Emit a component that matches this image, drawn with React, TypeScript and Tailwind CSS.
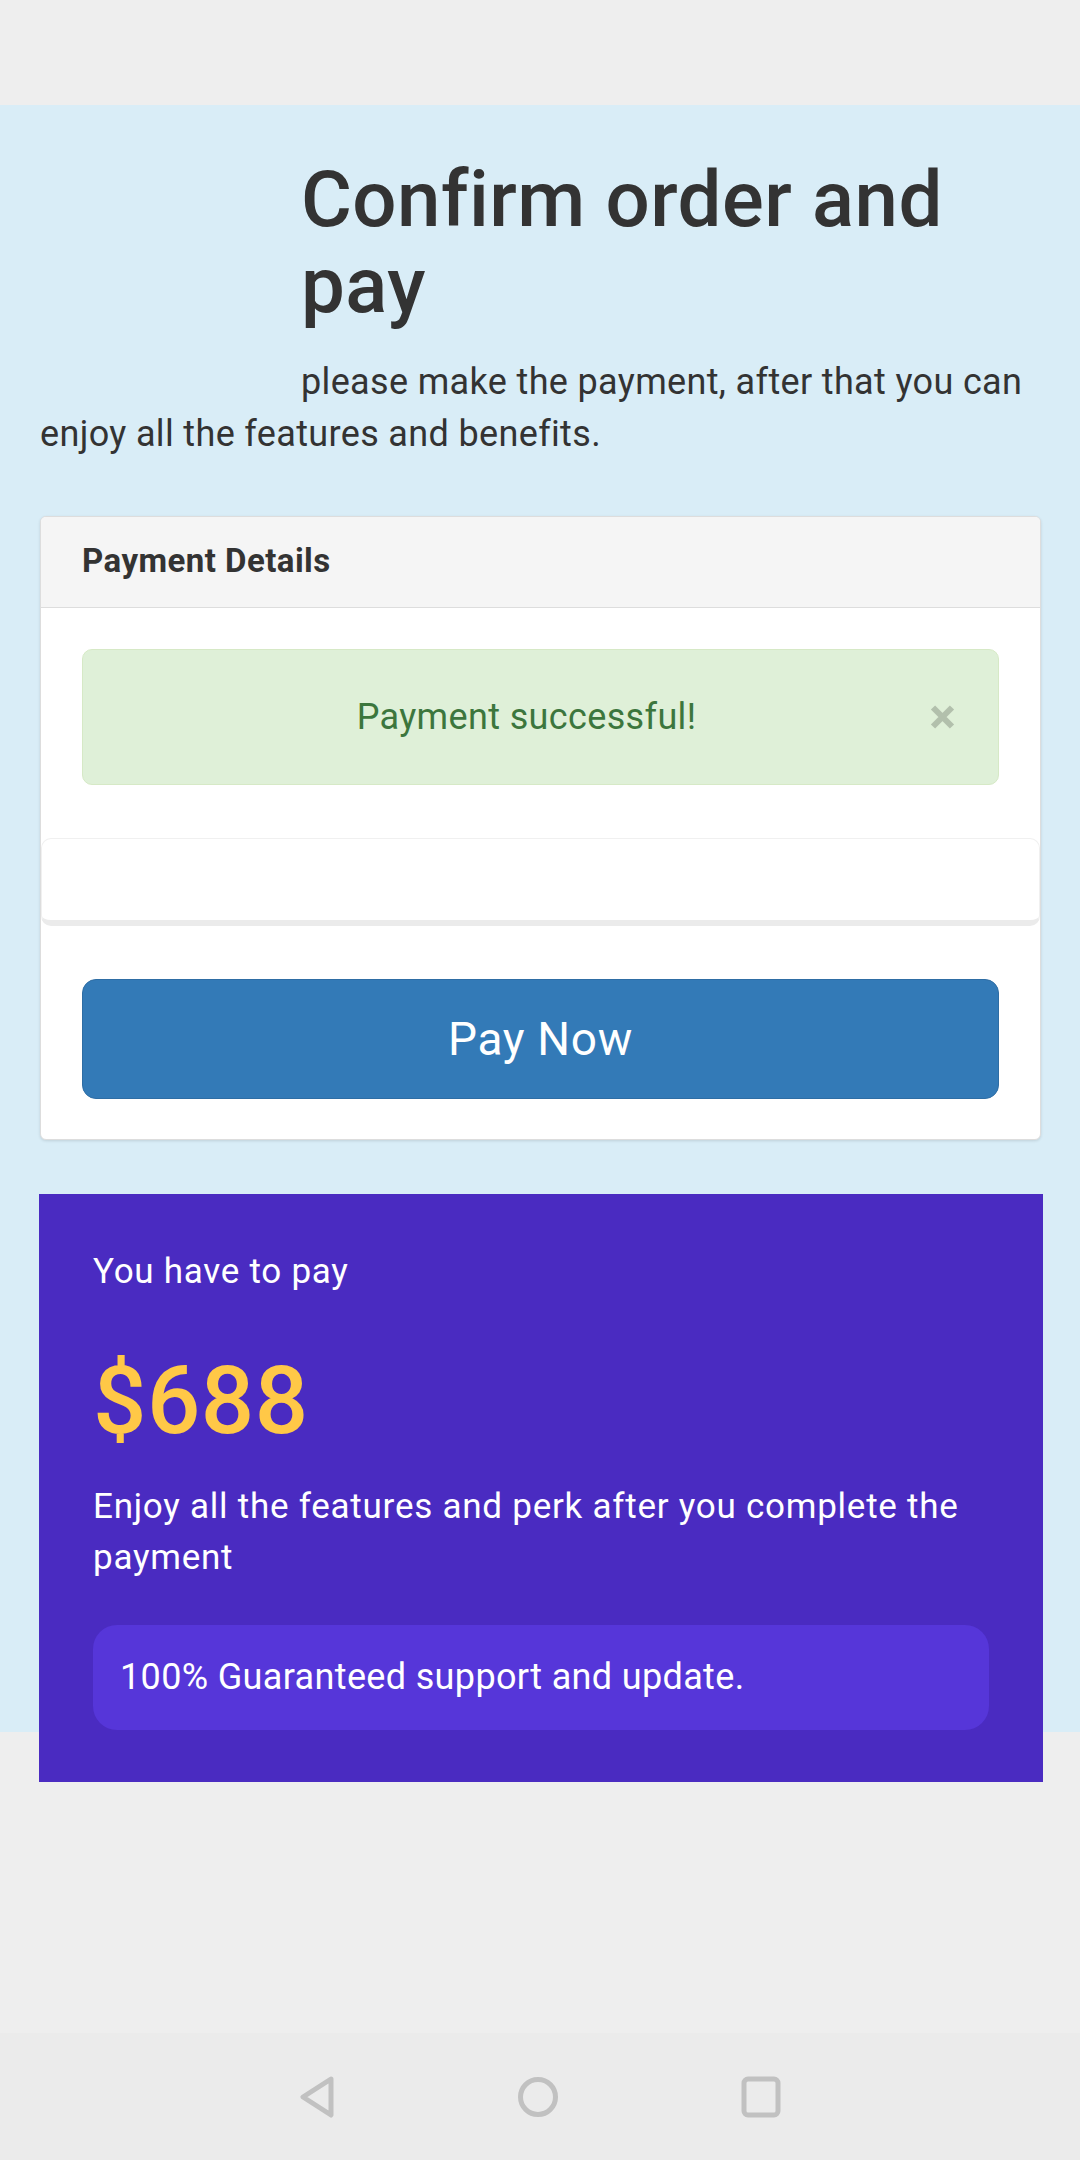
import React from "react";

const NavBar = () => (
  <div className="mt-auto h-[127px] bg-[#ebebeb] flex items-center justify-center gap-[183px]">
    <svg width="36" height="42" viewBox="0 0 36 42" fill="none">
      <path d="M32 3 L4 21 L32 39 Z" stroke="#c1c1c1" strokeWidth="5" strokeLinejoin="round" />
    </svg>
    <svg width="40" height="42" viewBox="0 0 40 42" fill="none">
      <circle cx="20" cy="21" r="17.5" stroke="#c1c1c1" strokeWidth="5" />
    </svg>
    <svg width="40" height="42" viewBox="0 0 40 42" fill="none">
      <rect x="3" y="3" width="34" height="36" rx="4" stroke="#c1c1c1" strokeWidth="5" />
    </svg>
  </div>
);

const App = () => {
  return (
    <div className="min-h-[2160px] flex flex-col bg-[#eeeeee] font-['Roboto',sans-serif] text-[#333]">
      <div className="h-[105px] shrink-0" />

      {/* 결제 확인 섹션 */}
      <section className="h-[1627px] shrink-0 bg-[#d9edf7] pl-[40px] pr-[39px] pt-[52px]">
        <h1 className="pl-[261px] text-[78px] leading-[86px] font-medium tracking-[0.45px]">Confirm order and pay</h1>
        <p className="mt-[27px] indent-[261px] text-[36px] leading-[52px] tracking-[0.35px]">
          please make the payment, after that you can enjoy all the features and benefits.
        </p>

        <div className="mt-[56px] bg-white border border-[#ddd] rounded-[6px] shadow-[0_1px_3px_rgba(0,0,0,0.12)] overflow-hidden">
          <div className="bg-[#f5f5f5] border-b border-[#ddd] px-[41px] pt-[20px] pb-[22px] text-[33px] leading-[48px] font-bold tracking-[0.45px]">
            Payment Details
          </div>
          <div className="px-[41px] pt-[41px] pb-[40px] flex flex-col">
            <div className="relative rounded-[10px] border border-[#d6e9c6] bg-[#dff0d8] text-[#3c763d] text-[36px] leading-[52px] py-[41px] pl-[41px] pr-[69px] text-center tracking-[0.36px]">
              Payment successful!
              <svg className="absolute right-[43px] top-1/2 -translate-y-1/2" width="25" height="25" viewBox="0 0 25 25">
                <path d="M3 3 L22 22 M22 3 L3 22" stroke="#000" strokeOpacity="0.2" strokeWidth="6" />
              </svg>
            </div>

            <div className="mt-[53px] -mx-[41px] h-[88px] rounded-[10px] bg-white border border-[#f0f0f0] border-b-[6px] border-b-[#ebebeb]" />

            <button className="mt-[53px] h-[120px] w-full rounded-[14px] bg-[#337ab7] border border-[#2e6da4] text-white text-[46px] tracking-[0.7px]">
              Pay Now
            </button>
          </div>
        </div>

        <div className="mt-[54px] -ml-[1px] -mr-[2px] bg-[#4a2bc1] px-[54px] pt-[53px] pb-[52px] text-white">
          <p className="text-[35px] leading-[50px] tracking-[0.73px]">You have to pay</p>
          <p className="mt-[53px] text-[94px] leading-[102px] font-medium text-[#ffc847] tracking-[0.5px]">$688</p>
          <p className="mt-[29px] text-[35px] leading-[51px] tracking-[0.75px]">
            Enjoy all the features and perk after you complete the payment
          </p>
          <div className="mt-[42px] rounded-[24px] bg-[#5636d9] px-[27px] py-[26px] text-[36px] leading-[53px] tracking-[0.35px]">
            100% Guaranteed support and update.
          </div>
        </div>
      </section>

      <NavBar />
    </div>
  );
};

export default App;
